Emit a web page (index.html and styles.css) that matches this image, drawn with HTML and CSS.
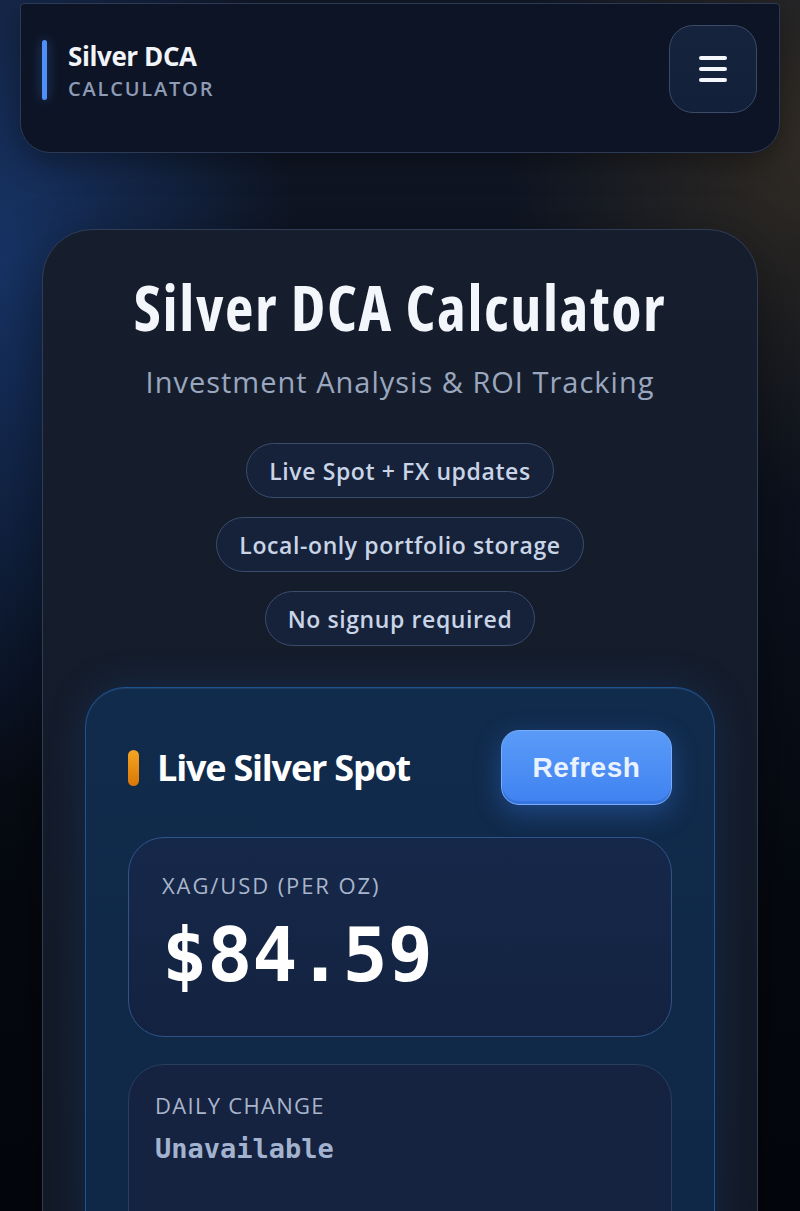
FILE: index.html
```html
<!DOCTYPE html>
<html lang="en">
<head>
<meta charset="utf-8">
<title>Silver DCA Calculator</title>
<link rel="stylesheet" href="styles.css">
</head>
<body>
  <header class="topbar">
    <div class="brand">
      <span class="brand-bar"></span>
      <div class="brand-text">
        <div class="brand-name">Silver DCA</div>
        <div class="brand-sub">CALCULATOR</div>
      </div>
    </div>
    <button class="menu-btn" aria-label="Open menu">
      <span></span><span></span><span></span>
    </button>
  </header>

  <main class="hero">
    <h1 class="hero-title">Silver DCA Calculator</h1>
    <p class="hero-sub">Investment Analysis &amp; ROI Tracking</p>
    <ul class="pills">
      <li class="pill">Live Spot + FX updates</li>
      <li class="pill">Local-only portfolio storage</li>
      <li class="pill">No signup required</li>
    </ul>

    <section class="spot">
      <div class="spot-head">
        <h2 class="spot-title"><span class="spot-dot"></span>Live Silver Spot</h2>
        <button class="refresh">Refresh</button>
      </div>
      <div class="stat stat-price">
        <div class="stat-label">XAG/USD (PER OZ)</div>
        <div class="stat-value">$84.59</div>
      </div>
      <div class="stat stat-change">
        <div class="stat-label">DAILY CHANGE</div>
        <div class="stat-note">Unavailable</div>
      </div>
    </section>
  </main>
</body>
</html>
```
FILE: styles.css
```css
* { box-sizing: border-box; }

html, body { margin: 0; }

body {
  height: 1211px;
  overflow: hidden;
  font-family: "Open Sans", "Noto Sans", sans-serif;
  color: #eef2f8;
  background:
    radial-gradient(ellipse 420px 760px at 0px 260px, rgba(30, 76, 156, 0.55), transparent 70%),
    radial-gradient(ellipse 420px 520px at 800px 140px, rgba(115, 85, 35, 0.33), transparent 70%),
    linear-gradient(180deg, #111827 0%, #0b111d 45%, #05080f 75%, #03060c 100%);
}

/* ---------- top bar ---------- */
.topbar {
  margin: 3px 20px 0;
  height: 150px;
  padding: 21px 22px 0 21px;
  display: flex;
  align-items: flex-start;
  justify-content: space-between;
  background: #0d1425;
  border: 1.5px solid #2c3a56;
  border-radius: 4px 4px 30px 30px;
  box-shadow: 0 10px 30px rgba(0, 0, 0, 0.35);
}

.brand {
  margin-top: 15px;
  display: flex;
  align-items: center;
  gap: 21px;
}

.brand-bar {
  width: 5px;
  height: 60px;
  border-radius: 3px;
  background: #4f8ff7;
  box-shadow: 0 0 12px rgba(79, 143, 247, 0.45);
}

.brand-name {
  font-size: 26px;
  font-weight: 700;
  line-height: 1.25;
  letter-spacing: -0.4px;
  color: #f1f4f9;
}

.brand-sub {
  margin-top: 4px;
  font-size: 20px;
  font-weight: 600;
  letter-spacing: 1.8px;
  line-height: 1.2;
  color: #8e9bb4;
}

.menu-btn {
  width: 88px;
  height: 88px;
  padding: 0;
  border-radius: 24px;
  border: 1.5px solid #3a4a68;
  background: linear-gradient(180deg, #16233c, #13203a);
  display: flex;
  flex-direction: column;
  align-items: center;
  justify-content: center;
  gap: 7px;
}

.menu-btn span {
  width: 28px;
  height: 4px;
  border-radius: 2px;
  background: #f4f7fb;
}

/* ---------- hero card ---------- */
.hero {
  margin: 76px 42px 0;
  padding: 44px 42px 0;
  min-height: 1100px;
  border: 1.5px solid #2f3c56;
  border-radius: 50px 50px 0 0;
  background: linear-gradient(180deg, #161e2e, #121925);
  box-shadow: 0 20px 60px rgba(0, 0, 0, 0.4);
  text-align: center;
}

.hero-title {
  margin: 0;
  font-size: 62px;
  font-weight: 700;
  font-stretch: 75%;
  line-height: 1.07;
  letter-spacing: 1.6px;
  color: #f3f6fb;
}

.hero-sub {
  margin: 22px 0 0;
  font-size: 29px;
  font-weight: 380;
  letter-spacing: 1px;
  color: #9aa7bf;
}

.pills {
  list-style: none;
  margin: 42px 0 0;
  padding: 0;
  display: flex;
  flex-direction: column;
  align-items: center;
  gap: 19px;
}

.pill {
  height: 55px;
  padding: 0 22px;
  display: flex;
  align-items: center;
  border: 1.5px solid #3a4c6c;
  border-radius: 999px;
  background: #15223a;
  font-size: 23px;
  font-weight: 600;
  letter-spacing: 0.6px;
  color: #c9d4e6;
}

/* ---------- live spot card ---------- */
.spot {
  margin-top: 41px;
  padding: 42px 42px 40px;
  border: 1.5px solid #1e5590;
  border-radius: 40px;
  background: linear-gradient(180deg, #112b4c, #0f2746);
  box-shadow: 0 0 40px rgba(40, 110, 220, 0.18), inset 0 1px 0 rgba(120, 170, 255, 0.12);
  text-align: left;
}

.spot-head {
  display: flex;
  align-items: center;
  justify-content: space-between;
}

.spot-title {
  margin: 0;
  display: flex;
  align-items: center;
  gap: 18px;
  font-size: 36px;
  font-weight: 700;
  letter-spacing: -1.2px;
  color: #ffffff;
}

.spot-dot {
  width: 11px;
  height: 36px;
  border-radius: 6px;
  background: linear-gradient(180deg, #f6a623, #d97706);
}

.refresh {
  width: 171px;
  height: 75px;
  padding: 0;
  border-radius: 18px;
  border: 1.5px solid #79adff;
  background: linear-gradient(180deg, #5a9bf8, #3f82f0);
  box-shadow: 0 8px 26px rgba(59, 130, 246, 0.35), inset 0 -3px 0 rgba(20, 60, 150, 0.2);
  color: #eaf2ff;
  font-family: "Liberation Sans", Arial, sans-serif;
  font-size: 28px;
  font-weight: 700;
  letter-spacing: 0.5px;
}

.stat {
  border-radius: 36px;
}

.stat-price {
  margin-top: 32px;
  height: 200px;
  padding: 34px 33px;
  border: 1.5px solid #2f5487;
  background: linear-gradient(180deg, #16284a, #132240);
}

.stat-change {
  margin-top: 27px;
  min-height: 200px;
  padding: 27px 26px;
  border: 1.5px solid #2a3e5e;
  background: #152341;
}

.stat-label {
  font-size: 22px;
  font-weight: 400;
  letter-spacing: 1.9px;
  line-height: 1.2;
  color: #a9b5cb;
}

.stat-change .stat-label {
  letter-spacing: 1.3px;
}

.stat-value {
  margin-top: 15px;
  font-family: "DejaVu Sans Mono", "Liberation Mono", monospace;
  font-size: 75px;
  font-weight: 700;
  line-height: 1.1;
  color: #ffffff;
}

.stat-note {
  margin-top: 14px;
  font-family: "DejaVu Sans Mono", "Liberation Mono", monospace;
  font-size: 27px;
  font-weight: 700;
  color: #a3b3cf;
}
```
